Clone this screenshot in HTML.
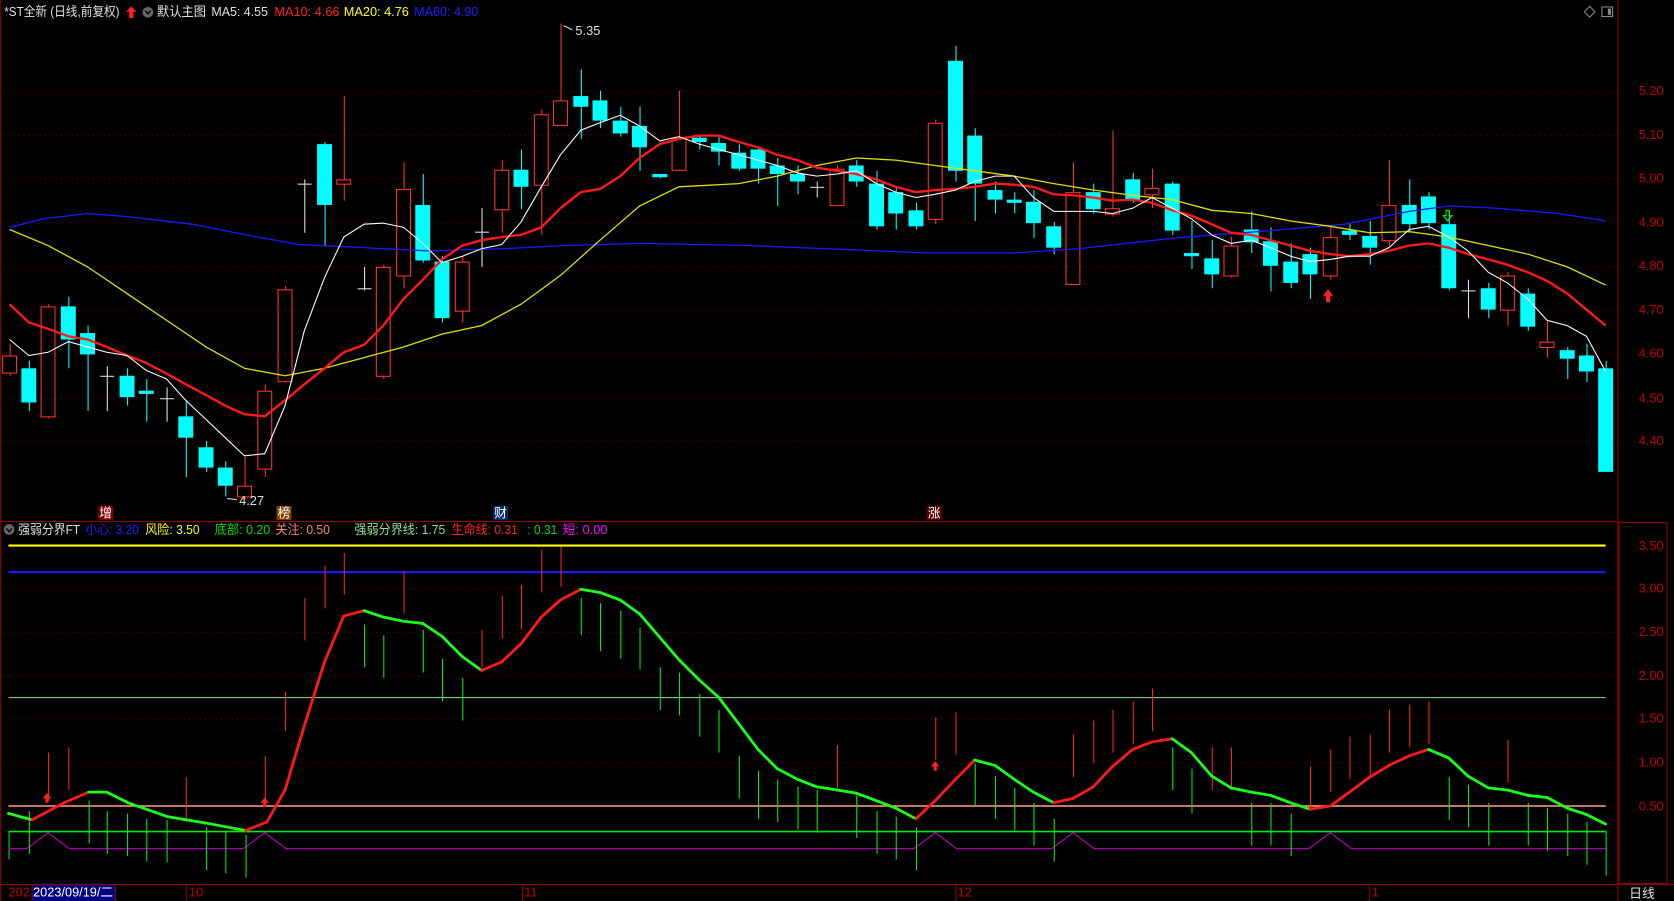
<!DOCTYPE html>
<html><head><meta charset="utf-8"><style>
html,body{margin:0;padding:0;background:#000;overflow:hidden}
svg{display:block}
text{font-family:"Liberation Sans","Noto Sans CJK SC",sans-serif;font-size:12px}
</style></head><body>
<svg id="s" width="1674" height="901" viewBox="0 0 1568 844" preserveAspectRatio="none" xmlns="http://www.w3.org/2000/svg">
<rect width="1568" height="844" fill="#000"/>
<g id="grid"></g>
<line x1="0.5" y1="0" x2="0.5" y2="844" stroke="#800000"/>
<line x1="1515.5" y1="0" x2="1515.5" y2="844" stroke="#900000"/>
<line x1="0" y1="488.5" x2="1515" y2="488.5" stroke="#900000"/>
<rect x="1516.5" y="489.5" width="45" height="338" fill="none" stroke="#900000"/>
<line x1="0" y1="828.5" x2="1568" y2="828.5" stroke="#900000"/>
<g id="ch"></g>
<text x="4" y="15" fill="#e0e0e0" textLength="108" lengthAdjust="spacingAndGlyphs">*ST全新 (日线,前复权)</text>
<path d="M123 6 L128 11 L125 11 L125 17 L121 17 L121 11 L118 11 Z" fill="#ff2020"/>
<circle cx="138.5" cy="11.5" r="5" fill="#666"/><path d="M136 10 L138.5 13 L141 10" stroke="#000" fill="none" stroke-width="1.3"/>
<text x="147" y="15" fill="#e0e0e0" textLength="46" lengthAdjust="spacingAndGlyphs">默认主图</text>
<text x="198" y="15" fill="#e0e0e0" textLength="53" lengthAdjust="spacingAndGlyphs">MA5: 4.55</text>
<text x="257" y="15" fill="#ff2020" textLength="61" lengthAdjust="spacingAndGlyphs">MA10: 4.66</text>
<text x="322" y="15" fill="#ffff00" textLength="61" lengthAdjust="spacingAndGlyphs">MA20: 4.76</text>
<text x="388" y="15" fill="#2020ff" textLength="60" lengthAdjust="spacingAndGlyphs">MA60: 4.90</text>
<path d="M1489 6 L1494 11 L1489 16 L1484 11 Z" fill="none" stroke="#888"/>
<rect x="1500.5" y="6.5" width="10" height="9" fill="none" stroke="#888"/><rect x="1506" y="8" width="3" height="6" fill="#888"/>
<g fill="#c00000" font-size="12">
<text x="1535" y="89">5.20</text><text x="1535" y="130">5.10</text><text x="1535" y="171">5.00</text><text x="1535" y="212">4.90</text><text x="1535" y="253">4.80</text><text x="1535" y="294">4.70</text><text x="1535" y="335">4.60</text><text x="1535" y="377">4.50</text><text x="1535" y="417">4.40</text>
<text x="1535" y="515">3.50</text><text x="1535" y="555">3.00</text><text x="1535" y="596">2.50</text><text x="1535" y="637">2.00</text><text x="1535" y="677">1.50</text><text x="1535" y="718">1.00</text><text x="1535" y="759">0.50</text>
</g>
<text x="539" y="33" fill="#e0e0e0">5.35</text><path d="M528 24 L536 28" stroke="#ddd"/>
<text x="224" y="473" fill="#e0e0e0">4.27</text><path d="M213 467 L222 468" stroke="#ddd"/>
<rect x="92" y="474" width="14" height="13" fill="#800000"/><text x="93" y="485" fill="#fff">增</text>
<rect x="259" y="474" width="14" height="13" fill="#804000"/><text x="260" y="485" fill="#fff">榜</text>
<rect x="462" y="474" width="14" height="13" fill="#003070"/><text x="463" y="485" fill="#fff">财</text>
<rect x="868" y="474" width="14" height="13" fill="#600000"/><text x="869" y="485" fill="#fff">涨</text>
<path d="M1244 271 L1249 277 L1246 277 L1246 283 L1242 283 L1242 277 L1239 277 Z" fill="#ff2020"/>
<path d="M1356 207 L1352 202 L1354.5 202 L1354.5 197 L1357.5 197 L1357.5 202 L1360 202 Z" fill="none" stroke="#00ff00"/>
<circle cx="8.5" cy="496" r="5" fill="#666"/><path d="M6 495 L8.5 498 L11 495" stroke="#000" fill="none" stroke-width="1.3"/>
<text x="17" y="500" fill="#e0e0e0" textLength="58" lengthAdjust="spacingAndGlyphs">强弱分界FT</text>
<text x="80" y="500" fill="#2020ff" textLength="50" lengthAdjust="spacingAndGlyphs">小心: 3.20</text>
<text x="136" y="500" fill="#ffff00" textLength="51" lengthAdjust="spacingAndGlyphs">风险: 3.50</text>
<text x="201" y="500" fill="#00dd00" textLength="52" lengthAdjust="spacingAndGlyphs">底部: 0.20</text>
<text x="258" y="500" fill="#ff8070" textLength="51" lengthAdjust="spacingAndGlyphs">关注: 0.50</text>
<text x="332" y="500" fill="#90e090" textLength="85" lengthAdjust="spacingAndGlyphs">强弱分界线: 1.75</text>
<text x="423" y="500" fill="#ff2020" textLength="62" lengthAdjust="spacingAndGlyphs">生命线: 0.31</text>
<text x="494" y="500" fill="#00dd00" textLength="28" lengthAdjust="spacingAndGlyphs">: 0.31</text>
<text x="527" y="500" fill="#ff00ff" textLength="42" lengthAdjust="spacingAndGlyphs">短: 0.00</text>
<text x="8" y="840" fill="#c00000">202</text>
<rect x="30" y="829" width="78" height="15" fill="#000080"/>
<text x="31" y="840" fill="#fff" textLength="75" lengthAdjust="spacingAndGlyphs">2023/09/19/二</text>
<g stroke="#900000"><line x1="30" y1="829" x2="30" y2="844"/><line x1="108" y1="829" x2="108" y2="844"/><line x1="174.5" y1="829" x2="174.5" y2="844"/><line x1="489.5" y1="829" x2="489.5" y2="844"/><line x1="895.5" y1="829" x2="895.5" y2="844"/><line x1="1282.5" y1="829" x2="1282.5" y2="844"/></g>
<text x="177" y="840" fill="#c00000">10</text>
<text x="491" y="840" fill="#c00000">11</text>
<text x="897" y="840" fill="#c00000">12</text>
<text x="1285" y="840" fill="#c00000">1</text>
<text x="1526" y="841" fill="#e0e0e0">日线</text>
</svg>
<script>
var NS="http://www.w3.org/2000/svg";
function el(p,t,a){var e=document.createElementNS(NS,t);for(var k in a)e.setAttribute(k,a[k]);p.appendChild(e);return e;}
var G=document.getElementById('grid'),C=document.getElementById('ch');
[85,126,167,208,249,290,331,373,413,511,551,592,633,673,714,755].forEach(function(y){el(G,'line',{x1:2,x2:1515,y1:y+.5,y2:y+.5,stroke:'#700000','stroke-dasharray':'1 4'});});
el(C,'line',{x1:8,x2:1504,y1:511,y2:511,stroke:'#ffff00','stroke-width':2});
el(C,'line',{x1:8,x2:1504,y1:536,y2:536,stroke:'#1a1aff','stroke-width':2});
el(C,'line',{x1:8,x2:1504,y1:653.5,y2:653.5,stroke:'#90e090','stroke-width':1});
el(C,'line',{x1:8,x2:1504,y1:755,y2:755,stroke:'#ffa080','stroke-width':1.5});
el(C,'line',{x1:8,x2:1504,y1:779,y2:779,stroke:'#00ee00','stroke-width':1.5});
el(C,'line',{x1:8.5,x2:8.5,y1:779,y2:805,stroke:'#00ee00'});
var pp="M8 795",bx=[45,248,876,1005,1246];
bx.forEach(function(b){pp+=" L"+(b-20)+" 795 L"+b+" 780 L"+(b+20)+" 795";});pp+=" L1504 795";
el(C,'path',{d:pp,stroke:'#c000c0',fill:'none'});
var K=[[9,333,349,322,352,'r'],[27,345,377,338,385,'c'],[45,287,390,285,392,'r'],[64,287,318,278,345,'c'],[82,312,332,305,385,'c'],[100,352,352,343,385,'w'],[119,352,372,345,380,'c'],[137,366,369,355,395,'c'],[156,373,373,363,395,'w'],[174,390,410,375,447,'c'],[193,419,438,413,442,'c'],[211,438,455,432,465,'c'],[229,455,465,428,468,'r'],[248,366,439,360,447,'r'],[267,271,357,268,358,'r'],[285,172,172,168,218,'w'],[304,135,192,133,230,'c'],[322,168,172,90,188,'r'],[341,270,270,250,272,'w'],[359,250,352,248,355,'r'],[378,177,258,152,270,'r'],[396,192,244,163,246,'c'],[414,245,298,240,302,'c'],[433,245,291,240,302,'r'],[451,217,217,195,250,'w'],[470,159,196,150,218,'r'],[488,159,175,140,196,'c'],[507,107,173,102,220,'r'],[525,94,117,22,118,'r'],[544,90,100,65,130,'c'],[562,94,113,85,120,'c'],[581,113,125,100,128,'c'],[599,118,138,100,160,'c'],[618,163,166,163,167,'c'],[636,129,159,85,160,'r'],[655,129,133,126,140,'c'],[673,134,142,128,155,'c'],[692,143,158,135,160,'c'],[710,140,158,137,172,'c'],[728,155,163,148,193,'c'],[747,163,170,155,182,'c'],[765,175,175,170,185,'w'],[784,158,192,155,193,'r'],[802,155,170,150,175,'c'],[821,172,212,160,215,'c'],[839,180,200,175,215,'c'],[858,197,212,190,215,'c'],[876,115,205,112,210,'r'],[895,57,160,43,170,'c'],[913,127,172,120,207,'c'],[932,178,187,170,200,'c'],[950,187,190,180,200,'c'],[968,189,209,178,223,'c'],[987,212,232,208,238,'c'],[1005,180,266,152,267,'r'],[1024,180,196,172,200,'c'],[1042,195,200,122,203,'r'],[1061,168,188,162,190,'c'],[1079,176,182,158,195,'r'],[1098,172,216,170,220,'c'],[1116,237,240,207,252,'c'],[1135,242,257,225,270,'c'],[1153,230,258,222,260,'r'],[1172,215,227,198,237,'c'],[1190,226,249,213,273,'c'],[1209,245,265,228,270,'c'],[1227,238,257,232,280,'c'],[1246,222,258,212,262,'r'],[1264,216,220,210,225,'c'],[1283,221,232,207,248,'c'],[1301,192,225,150,230,'r'],[1320,192,210,168,218,'c'],[1338,184,209,180,215,'c'],[1357,210,270,198,272,'c'],[1375,272,272,262,298,'w'],[1394,270,290,265,298,'c'],[1412,258,290,255,305,'r'],[1431,275,306,270,310,'c'],[1449,320,325,300,335,'r'],[1468,328,336,325,355,'c'],[1486,333,348,322,358,'c'],[1504,345,442,338,442,'c']];
K.forEach(function(k){var x=k[0],col=k[5]=='c'?'#00ffff':(k[5]=='r'?'#ff3030':'#e0e0e0');
 if(k[5]=='w'){el(C,'line',{x1:x+.5,x2:x+.5,y1:k[3],y2:k[4],stroke:col});el(C,'line',{x1:x-6,x2:x+7,y1:k[1]+.5,y2:k[1]+.5,stroke:col});return;}
 if(k[5]=='c'){el(C,'line',{x1:x+.5,x2:x+.5,y1:k[3],y2:k[4],stroke:col});el(C,'rect',{x:x-7,y:k[1],width:14,height:Math.max(2,k[2]-k[1]),fill:col});}
 else{el(C,'line',{x1:x+.5,x2:x+.5,y1:k[3],y2:k[1],stroke:col});el(C,'line',{x1:x+.5,x2:x+.5,y1:k[2],y2:k[4],stroke:col});el(C,'rect',{x:x-6.5,y:k[1]+.5,width:13,height:Math.max(2,k[2]-k[1]),fill:'none',stroke:col});}
});
function line(pts,col,w){el(C,'polyline',{points:pts.map(function(p){return p.join(',')}).join(' '),fill:'none',stroke:col,'stroke-width':w});}
line([[9,213],[40,205],[82,200],[120,203],[180,210],[230,220],[280,229],[340,232],[400,235],[470,233],[530,230],[600,228],[700,230],[800,234],[870,237],[950,237],[1010,233],[1100,223],[1190,216],[1260,210],[1320,198],[1357,193],[1400,195],[1460,200],[1504,207]],'#1a1aff',1.2);
line([[9,215],[45,230],[82,250],[119,275],[156,300],[193,325],[229,345],[267,352],[304,345],[341,335],[378,325],[414,313],[451,305],[488,285],[525,258],[562,225],[599,193],[636,175],[692,172],[728,165],[765,155],[802,148],[839,150],[876,155],[913,160],[950,165],[987,172],[1024,178],[1061,183],[1098,187],[1135,197],[1172,200],[1209,207],[1246,212],[1283,218],[1320,217],[1357,222],[1394,230],[1431,238],[1468,250],[1504,267]],'#e0e000',1.2);
line([[9,285],[27,302],[45,308],[64,315],[82,318],[100,325],[119,333],[137,340],[156,350],[174,360],[193,370],[211,380],[229,388],[248,390],[267,375],[285,360],[304,345],[322,330],[341,323],[359,305],[378,280],[396,262],[414,243],[433,230],[451,225],[470,222],[488,220],[507,213],[525,195],[544,180],[562,177],[581,165],[599,148],[618,135],[636,130],[655,127],[673,127],[692,133],[710,138],[728,145],[747,150],[765,157],[784,160],[802,163],[821,168],[839,175],[858,180],[876,178],[895,177],[913,175],[932,172],[950,173],[968,175],[987,182],[1005,183],[1024,185],[1042,188],[1061,187],[1079,190],[1098,197],[1116,202],[1135,210],[1153,218],[1172,220],[1190,225],[1209,230],[1227,235],[1246,238],[1264,240],[1283,238],[1301,235],[1320,230],[1338,228],[1357,232],[1375,238],[1394,243],[1412,248],[1431,255],[1449,263],[1468,275],[1486,290],[1504,305]],'#ff1a1a',2.2);
line([[9,318],[27,333],[45,330],[64,320],[82,325],[100,330],[119,333],[137,347],[156,355],[174,375],[193,393],[211,410],[229,427],[248,425],[267,380],[285,310],[304,260],[322,222],[341,210],[359,209],[378,213],[396,228],[414,246],[433,240],[451,233],[470,229],[488,208],[507,175],[525,145],[544,122],[562,115],[581,108],[599,118],[618,132],[636,128],[655,135],[673,140],[692,145],[710,150],[728,155],[747,162],[765,165],[784,163],[802,160],[821,172],[839,180],[858,185],[876,182],[895,178],[913,170],[932,165],[950,165],[968,185],[987,198],[1005,198],[1024,198],[1042,200],[1061,195],[1079,185],[1098,195],[1116,205],[1135,220],[1153,228],[1172,225],[1190,232],[1209,240],[1227,245],[1246,243],[1264,240],[1283,240],[1301,232],[1320,215],[1338,212],[1357,222],[1375,235],[1394,255],[1412,265],[1431,280],[1449,300],[1468,305],[1486,315],[1504,348]],'#ffffff',1);
var R=[[45,705,750],[64,700,740],[174,728,770],[248,708,750],[267,648,685],[285,560,600],[304,530,570],[322,518,557],[378,535,575],[451,590,625],[470,558,598],[488,548,590],[507,515,555],[525,512,550],[784,698,738],[876,672,712],[895,667,707],[1005,688,728],[1024,675,715],[1042,665,705],[1061,657,697],[1079,645,685],[1135,700,740],[1153,700,740],[1227,718,758],[1246,702,742],[1264,690,730],[1283,688,728],[1301,665,705],[1320,660,700],[1338,657,697],[1412,693,733]];
var Gr=[[27,760,800],[83,750,790],[100,760,800],[119,762,802],[137,767,807],[156,768,808],[193,775,815],[211,778,818],[230,782,822],[341,585,625],[359,595,635],[396,590,630],[414,617,657],[433,635,675],[544,560,595],[562,565,610],[581,572,617],[599,588,627],[618,625,665],[636,630,670],[655,650,690],[673,665,705],[692,708,748],[710,722,767],[728,730,770],[747,737,777],[765,740,780],[802,745,785],[821,760,800],[839,765,805],[858,775,815],[913,715,755],[932,727,767],[950,738,778],[968,752,792],[987,767,807],[1098,700,740],[1116,720,762],[1172,752,792],[1190,752,792],[1209,762,802],[1357,728,768],[1375,735,775],[1394,752,792],[1431,752,792],[1449,757,797],[1468,762,802],[1486,770,810],[1504,778,820]];
R.forEach(function(b){el(C,'line',{x1:b[0]+.5,x2:b[0]+.5,y1:b[1],y2:b[2],stroke:'#ff2020'});});
Gr.forEach(function(b){el(C,'line',{x1:b[0]+.5,x2:b[0]+.5,y1:b[1],y2:b[2],stroke:'#00ee00'});});
var L=[[8,762],[30,768],[60,752],[83,742],[100,742],[120,752],[157,765],[193,771],[230,778],[250,770],[267,740],[285,680],[304,620],[322,577],[341,572],[359,578],[378,582],[396,584],[414,596],[433,615],[451,628],[470,620],[488,603],[507,578],[525,562],[544,552],[562,555],[581,562],[599,575],[618,597],[636,618],[655,637],[673,653],[692,678],[710,702],[728,720],[747,730],[765,737],[784,740],[802,743],[821,750],[839,757],[858,767],[876,750],[895,730],[913,712],[932,717],[950,730],[968,742],[987,752],[1005,748],[1024,737],[1042,718],[1061,702],[1079,695],[1098,692],[1116,705],[1135,727],[1153,738],[1172,742],[1190,745],[1209,752],[1227,758],[1246,755],[1264,742],[1283,728],[1301,717],[1320,708],[1338,702],[1357,710],[1375,727],[1394,738],[1412,740],[1431,745],[1449,747],[1468,757],[1486,763],[1504,772]];
for(var i=0;i<L.length-1;i++){el(C,'line',{x1:L[i][0],y1:L[i][1],x2:L[i+1][0],y2:L[i+1][1],stroke:L[i+1][1]<L[i][1]?'#ff1a1a':'#1aff1a','stroke-width':2.6,'stroke-linecap':'round'});}
[[44,748],[248,752],[876,718]].forEach(function(a){el(C,'path',{d:'M'+a[0]+' '+(a[1]-5)+' l4 5 h-2.5 v4 h-3 v-4 h-2.5 z',fill:'#ff2020'});});
</script>
</body></html>
